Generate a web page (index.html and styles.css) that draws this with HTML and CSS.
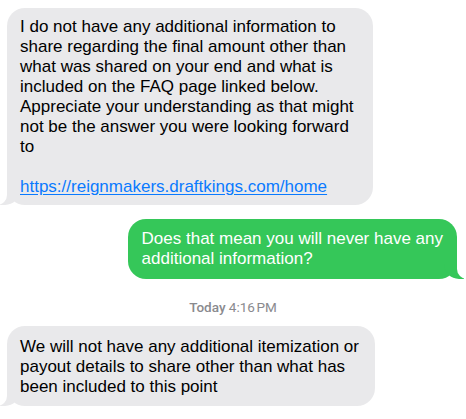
FILE: index.html
```html
<!DOCTYPE html>
<html>
<head>
  <title>Messages</title>
  <meta name="viewport" content="width=device-width, initial-scale=1.0">
  <link rel="stylesheet" href="styles.css">
</head>
<body>
  <div class="thread">
    <div class="bubble received first">
      I do not have any additional information to<br>
      share regarding the final amount other than<br>
      what was shared on your end and what is<br>
      included on the FAQ page linked below.<br>
      Appreciate your understanding as that might<br>
      not be the answer you were looking forward<br>
      to<br>
      <br>
      <a href="#">https://reignmakers.draftkings.com/home</a>
    </div>

    <div class="bubble sent">
      Does that mean you will never have any<br>
      additional information?
    </div>

    <div class="stamp"><b>Today</b> 4:16&#8239;PM</div>

    <div class="bubble received last">
      We will not have any additional itemization or<br>
      payout details to share other than what has<br>
      been included to this point
    </div>
  </div>
</body>
</html>
```

FILE: styles.css
```css
body {
  margin: 0;
  background: #fff;
  font-family: "Liberation Sans", Arial, sans-serif;
  color: #000;
}

.thread {
  display: flex;
  flex-direction: column;
  padding: 8px 0 0 7px;
}

.bubble {
  position: relative;
  box-sizing: border-box;
  font-size: 17px;
  line-height: 20px;
  padding: 9px 14px 8px 13px;
  border-radius: 18px;
  white-space: nowrap;
}

.received {
  align-self: flex-start;
  background: #e9e9eb;
}

.received::before {
  content: "";
  position: absolute;
  bottom: 0;
  left: -7px;
  width: 20px;
  height: 20px;
  background: #e9e9eb;
  border-bottom-right-radius: 15px;
}

.received::after {
  content: "";
  position: absolute;
  bottom: 0;
  left: -10px;
  width: 10px;
  height: 20px;
  background: #fff;
  border-bottom-right-radius: 10px;
}

.sent {
  align-self: flex-end;
  margin: 14px 9px 0 0;
  padding: 10px 14px;
  background: #35c759;
  color: #fff;
}

.sent::before {
  content: "";
  position: absolute;
  bottom: 0;
  right: -7px;
  width: 20px;
  height: 20px;
  background: #35c759;
  border-bottom-left-radius: 15px;
}

.sent::after {
  content: "";
  position: absolute;
  bottom: 0;
  right: -10px;
  width: 10px;
  height: 20px;
  background: #fff;
  border-bottom-left-radius: 10px;
}

.first {
  width: 366px;
}

.last {
  width: 368px;
  padding-top: 11px;
  padding-bottom: 9px;
}

.bubble a {
  position: relative;
  z-index: 1;
  color: #0a7aff;
  text-underline-offset: 2px;
}

.stamp {
  align-self: center;
  margin: 20px 0 10px -7px;
  font-family: Roboto, "Liberation Sans", sans-serif;
  font-size: 13.5px;
  line-height: 17px;
  color: #8a8a8e;
}

.stamp b {
  font-weight: 500;
}
```
